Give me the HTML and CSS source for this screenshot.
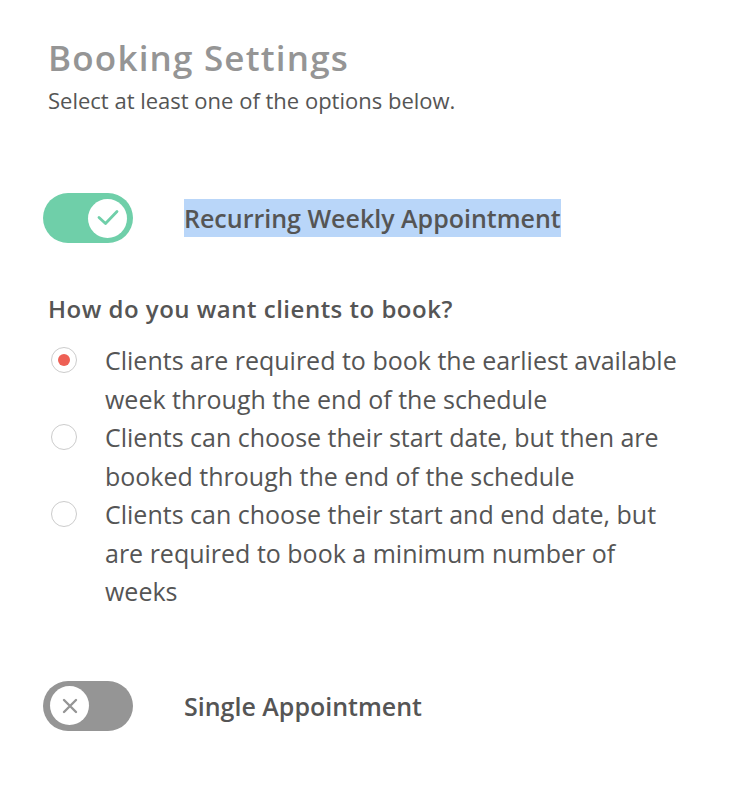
FILE: index.html
```html
<!DOCTYPE html>
<html lang="en">
<head>
    <meta charset="UTF-8">
    <meta name="viewport" content="width=device-width, initial-scale=1.0">
    <title>Booking Settings</title>
    <link rel="stylesheet" href="styles.css">
</head>
<body>
    <div class="settings">
        <h1>Booking Settings</h1>
        <p class="hint">Select at least one of the options below.</p>

        <div class="option">
            <span class="toggle on">
                <span class="knob">
                    <svg width="24" height="24" viewBox="0 0 24 24"><path d="M3 11.5 L9.5 17.5 L21 5.5" fill="none" stroke="#6fcfa9" stroke-width="2.8" stroke-linecap="round" stroke-linejoin="round"/></svg>
                </span>
            </span>
            <span class="option-label"><span class="selected">Recurring Weekly Appointment</span></span>
        </div>

        <h2>How do you want clients to book?</h2>
        <ul class="choices">
            <li><span class="radio checked"></span><span class="choice-text">Clients are required to book the earliest available week through the end of the schedule</span></li>
            <li><span class="radio"></span><span class="choice-text">Clients can choose their start date, but then are booked through the end of the schedule</span></li>
            <li><span class="radio"></span><span class="choice-text">Clients can choose their start and end date, but are required to book a minimum number of weeks</span></li>
        </ul>

        <div class="option single">
            <span class="toggle off">
                <span class="knob">
                    <svg width="20" height="20" viewBox="0 0 20 20"><path d="M4 4 L16 16 M16 4 L4 16" fill="none" stroke="#959595" stroke-width="2.4" stroke-linecap="round"/></svg>
                </span>
            </span>
            <span class="option-label">Single Appointment</span>
        </div>
    </div>
</body>
</html>
```

FILE: styles.css
```css
body {
    font-family: "Open Sans", Lato, sans-serif;
    margin: 0;
    padding: 0;
    background-color: #fff;
    color: #555;
}

.settings {
    padding: 36px 48px 0 48px;
    width: 660px;
}

h1 {
    font-size: 35px;
    font-weight: 600;
    letter-spacing: 1.2px;
    color: #959595;
    margin: 0;
    line-height: 44px;
}

.hint {
    font-size: 22px;
    margin: 6px 0 0 0;
    line-height: 28px;
    color: #555;
}

.option {
    display: flex;
    align-items: center;
    margin-top: 79px;
    margin-left: -5px;
}

.toggle {
    width: 90px;
    height: 50px;
    border-radius: 25px;
    display: flex;
    align-items: center;
    flex-shrink: 0;
}

.toggle.on {
    background-color: #6fcfa9;
    justify-content: flex-end;
}

.toggle.off {
    background-color: #959595;
    justify-content: flex-start;
}

.knob {
    width: 39px;
    height: 39px;
    border-radius: 50%;
    background-color: #fff;
    margin: 0 6px 0 7px;
    display: flex;
    align-items: center;
    justify-content: center;
}

.option-label {
    font-size: 25px;
    font-weight: 600;
    margin-left: 51px;
    line-height: 38px;
    color: #555;
}

.selected {
    background-color: #b9d6f9;
    padding: 2px 0;
}

h2 {
    font-size: 24px;
    font-weight: 600;
    letter-spacing: 0.5px;
    margin: 51px 0 0 0;
    line-height: 30px;
    color: #555;
}

.choices {
    list-style: none;
    margin: 17px 0 0 0;
    padding: 0;
}

.choices li {
    display: flex;
    align-items: flex-start;
    font-size: 25px;
    line-height: 38.5px;
}

.choice-text {
    width: 580px;
}

.radio {
    width: 24px;
    height: 24px;
    border: 1px solid #ccc;
    border-radius: 50%;
    margin: 6px 28px 0 3px;
    flex-shrink: 0;
    display: flex;
    align-items: center;
    justify-content: center;
}

.radio.checked::after {
    content: "";
    width: 12px;
    height: 12px;
    border-radius: 50%;
    background-color: #ee6055;
}

.single {
    margin-top: 70px;
}
```
